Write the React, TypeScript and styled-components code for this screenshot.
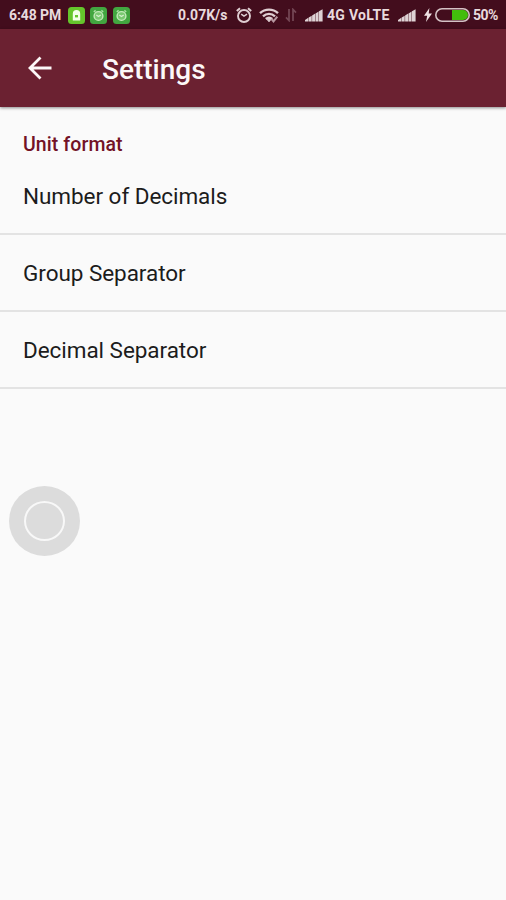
import React from "react";
import styled, { createGlobalStyle } from "styled-components";

const GlobalStyle = createGlobalStyle`
  *, *::before, *::after { box-sizing: border-box; }
  html, body { margin: 0; background: #fafafa; }
  body { font-family: Roboto, "Liberation Sans", sans-serif; }
`;

const Screen = styled.div`
  position: relative;
  width: 506px;
  height: 900px;
  overflow: hidden;
  background: #fafafa;
`;

const StatusBar = styled.div`
  display: flex;
  align-items: center;
  height: 29px;
  padding: 1px 8px 0 9px;
  background: #430d1d;
`;

const StatusText = styled.span<{ $width: number; $spacing?: number; $gap?: number }>`
  flex: none;
  width: ${(p) => p.$width}px;
  margin-left: ${(p) => p.$gap ?? 0}px;
  color: #e9dadd;
  font-size: 14px;
  font-weight: 700;
  line-height: 28px;
  letter-spacing: ${(p) => p.$spacing ?? 0}px;
  white-space: nowrap;
`;

const StatusIcon = styled.svg<{ $gap: number }>`
  flex: none;
  display: block;
  margin-left: ${(p) => p.$gap}px;
`;

const Toolbar = styled.header`
  position: relative;
  display: flex;
  align-items: center;
  height: 78px;
  padding-left: 28px;
  background: #6b2131;
  box-shadow: 0 1px 3px rgba(0, 0, 0, 0.45);
`;

const BackButton = styled.button`
  width: 24px;
  height: 24px;
  padding: 0;
  border: 0;
  background: none;
  svg { display: block; }
`;

const Title = styled.h1`
  margin: 4px 0 0 50px;
  color: #fcf8f8;
  font-size: 28px;
  line-height: 36px;
  font-weight: 500;
`;

const SectionTitle = styled.h2`
  margin: 0;
  padding: 26px 24px 0 23px;
  height: 53px;
  color: #731326;
  font-size: 19.5px;
  line-height: 24px;
  font-weight: 500;
  letter-spacing: 0.08px;
`;

const Preference = styled.div`
  display: flex;
  align-items: center;
  height: 77px;
  padding: 0 24px 0 23px;
  border-bottom: 2px solid #e3e3e3;
  color: #1c1c1c;
  font-size: 22.5px;
  line-height: 30px;
  letter-spacing: -0.05px;

  &:first-child { height: 75px; padding-bottom: 1px; }
`;

const AssistBall = styled.div`
  position: absolute;
  left: 9px;
  top: 486px;
  width: 71px;
  height: 70px;
  border-radius: 50%;
  background: #dcdcdc;
  display: grid;
  place-items: center;

  &::after {
    content: "";
    width: 41px;
    height: 40px;
    border: 2px solid #f8f8f8;
    border-radius: 50%;
  }
`;

const LockBadge = () => (
  <StatusIcon $gap={7} width="17" height="17" viewBox="0 0 17 17">
    <rect width="17" height="17" rx="3.5" fill="#65c52c" />
    <path d="M4.8 13.5V6.8a3.7 3.7 0 0 1 7.4 0v6.7z" fill="#f3ffe9" />
    <rect x="7" y="8" width="3" height="2.4" fill="#65c52c" />
  </StatusIcon>
);

const AppBadge = ({ gap }: { gap: number }) => (
  <StatusIcon $gap={gap} width="17" height="17" viewBox="0 0 17 17">
    <rect width="17" height="17" rx="3.5" fill="#42a640" />
    <circle cx="8.5" cy="9" r="4.4" fill="#7ac971" stroke="#c3eab9" strokeWidth="1.4" />
    <path d="M3.8 5 5.6 3.4M11.4 3.4 13.2 5" fill="none" stroke="#a9dfa0" strokeWidth="1.5" />
    <path d="m6.3 8 2.2 1.5L10.7 8" fill="none" stroke="#d5f0ce" strokeWidth="1.2" />
  </StatusIcon>
);

const Alarm = () => (
  <StatusIcon $gap={8} width="16" height="17" viewBox="0 0 16 17" fill="none" stroke="#dfced2">
    <circle cx="8" cy="9" r="6" strokeWidth="1.9" />
    <path d="m.8 4 3.2-2.8M15.2 4 12 1.2" strokeWidth="2" />
    <path d="m5.2 7.2 2.8 2 3-2" strokeWidth="1.5" />
  </StatusIcon>
);

const Wifi = () => (
  <StatusIcon $gap={7} width="20" height="15" viewBox="0 0 20 15" fill="none" stroke="#dfced2">
    <path d="M1 5.2c5-4.8 13-4.8 18 0M4 8.3c3.5-3.2 8.5-3.2 12 0M6.8 11c2-1.7 4.4-1.7 6.4 0" strokeWidth="2.4" />
    <path d="m8.2 11.6 1.8 2.2 1.8-2.2z" fill="#dfced2" />
    <path d="m12.5 11 2 2.4 3.8-4.8" stroke="#b797a0" strokeWidth="2" />
  </StatusIcon>
);

const DataArrows = () => (
  <StatusIcon $gap={6} width="12" height="14" viewBox="0 0 12 14" fill="none" stroke="#754856" strokeWidth="1.7">
    <path d="M4 1v11.5L1 9.3M8 13V1.5l3 3.2" />
  </StatusIcon>
);

const Signal = ({ gap }: { gap: number }) => (
  <StatusIcon $gap={gap} width="18" height="13" viewBox="0 0 18 13" fill="#ded1d4">
    <path d="M0 12.5v-1.4l3.3-2.3v3.7zM3.7 12.5V8.6l3-1.9v5.8zM7.1 12.5V6.5l3.1-1.9v7.9zM10.6 12.5V4.4l3-1.9v10zM14 12.5V2.3L17.6.2v12.3z" />
  </StatusIcon>
);

const Bolt = () => (
  <StatusIcon $gap={8} width="8" height="14" viewBox="0 0 8 14">
    <path d="M5.4 0 0 7.7h3.2L2 14l6-8.5H4.7z" fill="#eee1e3" />
  </StatusIcon>
);

const Battery = () => (
  <StatusIcon $gap={3} width="35" height="14" viewBox="0 0 35 14">
    <path d="M17 2h11a5 5 0 0 1 0 10H17z" fill="#42bd0c" />
    <rect x=".8" y=".8" width="33.4" height="12.4" rx="6.2" fill="none" stroke="#d4c2c5" strokeWidth="1.6" />
  </StatusIcon>
);

const preferences = ["Number of Decimals", "Group Separator", "Decimal Separator"];

export default function App() {
  return (
    <Screen>
      <GlobalStyle />
      <StatusBar>
        <StatusText $width={52} $spacing={-0.1}>6:48 PM</StatusText>
        <LockBadge />
        <AppBadge gap={5} />
        <AppBadge gap={6} />
        <StatusText $width={50} $gap={48}>0.07K/s</StatusText>
        <Alarm />
        <Wifi />
        <DataArrows />
        <Signal gap={8} />
        <StatusText $width={62} $gap={4} $spacing={0.3}>4G VoLTE</StatusText>
        <Signal gap={9} />
        <Bolt />
        <Battery />
        <StatusText $width={26} $gap={3} $spacing={-0.5}>50%</StatusText>
      </StatusBar>
      <Toolbar>
        <BackButton aria-label="Back">
          <svg width="24" height="24" viewBox="0 0 24 24" fill="none" stroke="#fcf8f8" strokeWidth="2.8">
            <path d="M23.5 12H2.5M12.5 1.5 2 12l10.5 10.5" />
          </svg>
        </BackButton>
        <Title>Settings</Title>
      </Toolbar>
      <SectionTitle>Unit format</SectionTitle>
      <section>
        {preferences.map((label) => (
          <Preference key={label}>{label}</Preference>
        ))}
      </section>
      <AssistBall />
    </Screen>
  );
}
